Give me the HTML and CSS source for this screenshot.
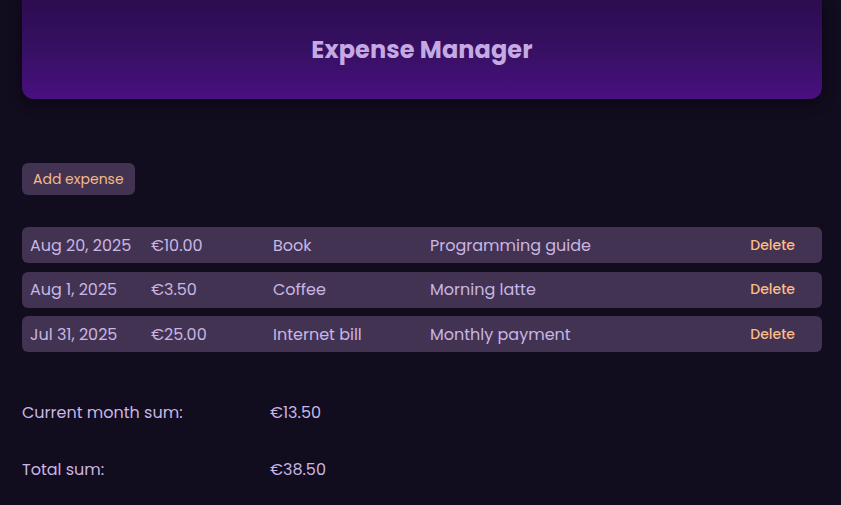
FILE: index.html
```html
<!DOCTYPE html>
<html lang="en">
<head>
<meta charset="utf-8">
<title>Expense Manager</title>
<link rel="stylesheet" href="styles.css">
</head>
<body>
<main class="app">
  <header class="hero">
    <h1 class="title">Expense Manager</h1>
  </header>
  <div class="actions">
    <button class="btn-add">Add expense</button>
  </div>
  <ul class="list">
    <li class="row"><span>Aug 20, 2025</span><span>€10.00</span><span>Book</span><span>Programming guide</span><button class="btn-del">Delete</button></li>
    <li class="row"><span>Aug 1, 2025</span><span>€3.50</span><span>Coffee</span><span>Morning latte</span><button class="btn-del">Delete</button></li>
    <li class="row"><span>Jul 31, 2025</span><span>€25.00</span><span>Internet bill</span><span>Monthly payment</span><button class="btn-del">Delete</button></li>
  </ul>
  <div class="sums">
    <div class="sum"><span>Current month sum:</span><span>€13.50</span></div>
    <div class="sum"><span>Total sum:</span><span>€38.50</span></div>
  </div>
</main>
</body>
</html>
```
FILE: styles.css
```css
html, body {
  margin: 0;
  padding: 0;
  background: #120c1f;
  font-family: Poppins, "Open Sans", sans-serif;
  color: #c9b6e4;
  height: 100%;
  overflow: hidden;
}
.app {
  width: 800px;
  margin: 0 0 0 22px;
}
.hero {
  height: 99px;
  border-radius: 0 0 12px 12px;
  background: linear-gradient(180deg, #2d0c50 0%, #361062 50%, #4a0f80 100%);
  box-shadow: 0 4px 14px rgba(0, 0, 0, 0.45);
  display: flex;
  align-items: center;
  justify-content: center;
}
.title {
  margin: 0;
  font-size: 24px;
  font-weight: 700;
  color: #c5a9e2;
  letter-spacing: 0.1px;
}
.actions {
  margin-top: 64px;
  display: flex;
}
.btn-add {
  height: 32px;
  padding: 0 11px;
  border: none;
  border-radius: 6px;
  background: #433352;
  color: #f6b985;
  font-family: inherit;
  font-size: 14px;
  font-weight: 400;
}
.list {
  list-style: none;
  margin: 32px 0 0;
  padding: 0;
  display: flex;
  flex-direction: column;
  gap: 8.5px;
}
.row {
  height: 36px;
  box-sizing: border-box;
  display: grid;
  grid-template-columns: 121px 122px 157px 1fr auto;
  align-items: center;
  padding: 0 15px 0 8px;
  background: #433352;
  border-radius: 6px;
  font-size: 16px;
  color: #c9b6e4;
}
.btn-del {
  border: none;
  background: transparent;
  color: #fbbd88;
  font-family: inherit;
  font-size: 14px;
  font-weight: 500;
  padding: 4px 12px;
}
.sums {
  margin-top: 50px;
  display: flex;
  flex-direction: column;
  gap: 35px;
}
.sum {
  display: grid;
  grid-template-columns: 248px 1fr;
  font-size: 16px;
  line-height: 22px;
  color: #c9b6e4;
}
```
